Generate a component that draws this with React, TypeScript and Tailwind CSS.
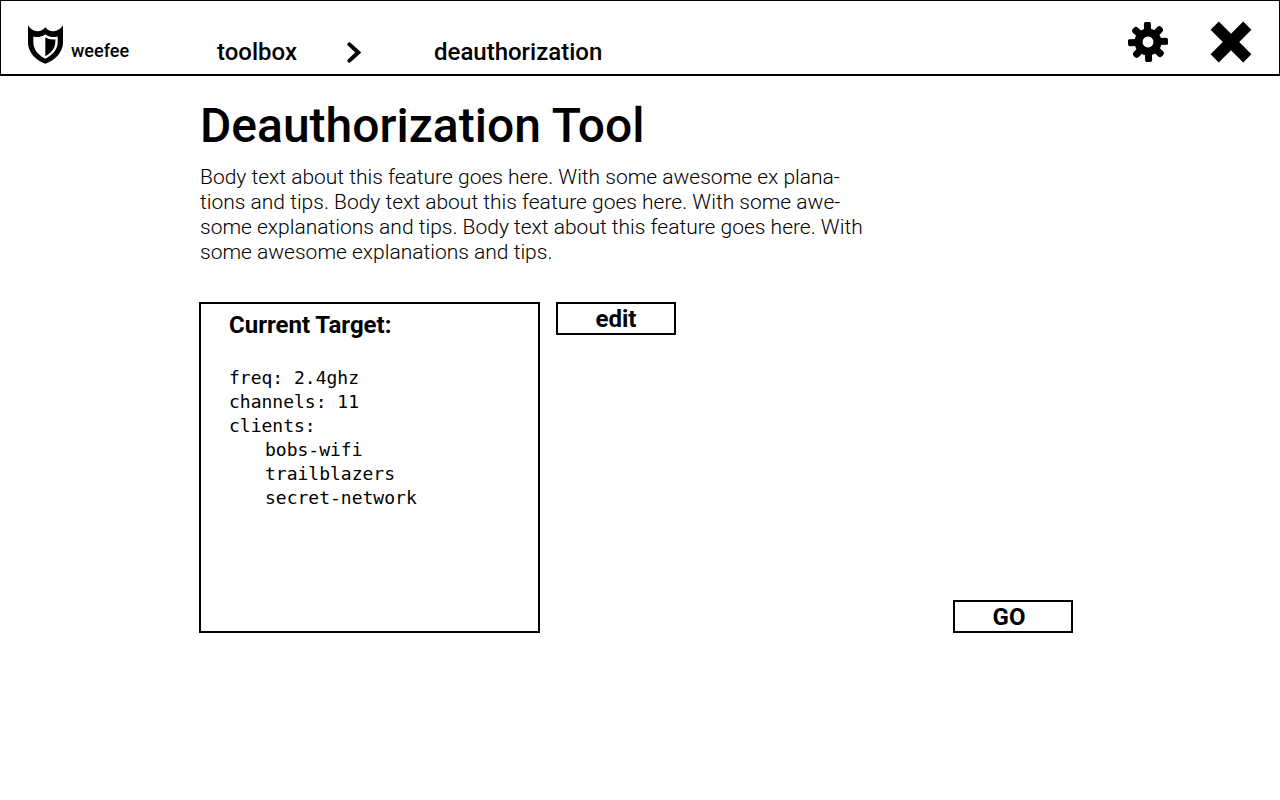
const straightTeeth = [0, 90, 180, 270];
const diagonalTeeth = [45, 135, 225, 315];

function ShieldLogo() {
  return (
    <svg viewBox="0 0 105 116" className="h-[39px] w-[35px]" aria-hidden="true">
      <path
        fillRule="evenodd"
        d="M0 0C5 9 12 14 20 17C33 21 45 15 52 6C59 15 71 21 84 17C92 14 100 9 105 0V52C105 82 80 106 52 116C24 106 0 82 0 52ZM16 34C30 38 43 34 52 27C61 34 74 38 89 34V52C89 75 70 92 52 101C34 92 16 75 16 52Z"
      />
      <path d="M52 36C61 42 72 44 82 42C83 65 76 79 52 93Z" />
    </svg>
  );
}

function Chevron() {
  return (
    <svg
      viewBox="0 0 14 21"
      className="h-[21px] w-[14px]"
      fill="none"
      stroke="currentColor"
      strokeWidth="4"
      strokeLinecap="round"
      aria-hidden="true"
    >
      <path d="M2.4 2.4L11.2 10.5L2.4 18.6" />
    </svg>
  );
}

function Gear() {
  return (
    <svg viewBox="-20 -20 40 40" className="size-10" aria-hidden="true">
      <g transform="rotate(-2)">
        <circle r="9.5" fill="none" stroke="currentColor" strokeWidth="8" />
        {straightTeeth.map((angle) => (
          <rect key={angle} x="-3.5" y="-20" width="7" height="10" rx="1.8" transform={`rotate(${angle})`} />
        ))}
        {diagonalTeeth.map((angle) => (
          <rect key={angle} x="-3.5" y="-20" width="7" height="10" rx="3" transform={`rotate(${angle})`} />
        ))}
      </g>
    </svg>
  );
}

function Cross() {
  return (
    <svg viewBox="-21 -21 42 42" className="size-[42px]" aria-hidden="true">
      <path
        d="M-16.3 -16.3L16.3 16.3M16.3 -16.3L-16.3 16.3"
        stroke="currentColor"
        strokeWidth="11.6"
      />
    </svg>
  );
}

export default function App() {
  return (
    <div className="min-h-screen bg-white font-['Roboto',sans-serif] text-black">
      <header className="flex h-[76px] items-start border-x border-t border-b-2 border-black px-[27px]">
        <a href="#home" className="flex w-[189px] gap-2 pt-6">
          <ShieldLogo />
          <span className="pt-3 text-[18px] leading-7 font-medium">weefee</span>
        </a>
        <nav aria-label="Breadcrumb" className="flex items-center pt-[33px] text-2xl leading-9 font-medium">
          <a href="#toolbox" className="w-[130px]">toolbox</a>
          <span className="w-[87px]">
            <Chevron />
          </span>
          <a href="#deauthorization" aria-current="page">deauthorization</a>
        </nav>
        <div className="ml-auto flex items-center gap-[42px] pt-5">
          <button type="button" aria-label="Settings">
            <Gear />
          </button>
          <button type="button" aria-label="Close">
            <Cross />
          </button>
        </div>
      </header>

      <main className="ml-[199px] max-w-[874px] pt-5">
        <div className="pl-px">
          <h1 className="text-[48px] leading-[60px] font-medium">Deauthorization Tool</h1>
          <p className="pt-[9px] text-[21px] leading-[25px] font-light">
            Body text about this feature goes here. With some awesome ex plana-
            <br />
            tions and tips. Body text about this feature goes here. With some awe-
            <br />
            some explanations and tips. Body text about this feature goes here. With
            <br />
            some awesome explanations and tips.
          </p>
        </div>

        <div className="flex items-start gap-4 pt-[37px]">
          <section className="min-h-[331px] w-[341px] border-2 border-black px-7 pt-1">
            <h2 className="text-2xl leading-[34px] font-bold">Current Target:</h2>
            <div className="pt-6 font-['DejaVu_Sans_Mono',monospace] text-[18px] leading-6">
              <p>freq: 2.4ghz</p>
              <p>channels: 11</p>
              <p>clients:</p>
              <ul className="pl-9">
                <li>bobs-wifi</li>
                <li>trailblazers</li>
                <li>secret-network</li>
              </ul>
            </div>
          </section>
          <button type="button" className="h-[33px] w-[120px] border-2 border-black text-2xl leading-[30px] font-bold">
            edit
          </button>
          <button
            type="button"
            className="ml-auto h-[33px] w-[120px] self-end border-2 border-black pr-2 text-2xl leading-[30px] font-bold"
          >
            GO
          </button>
        </div>
      </main>
    </div>
  );
}
